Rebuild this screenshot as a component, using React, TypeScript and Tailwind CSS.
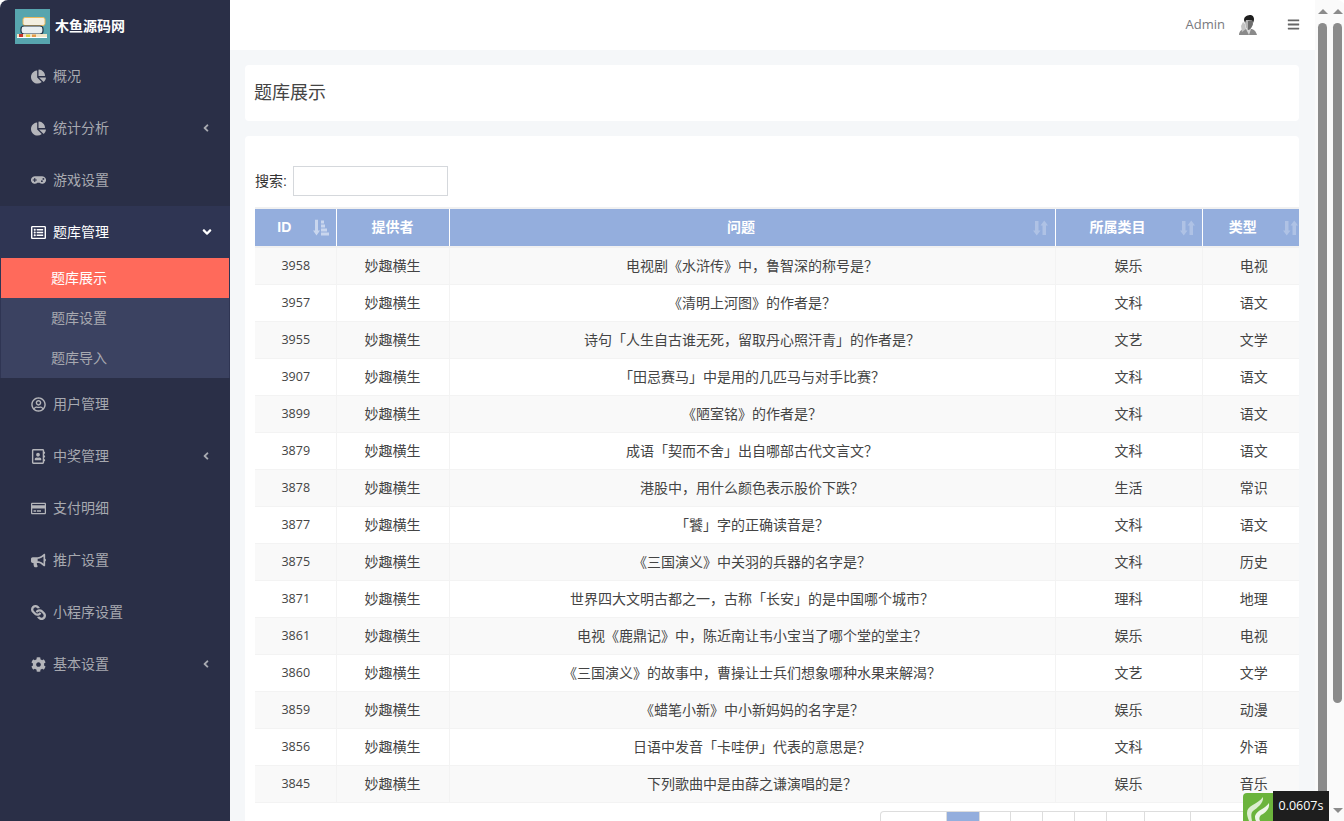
import React from "react";
import { FaChartPie, FaGamepad, FaRegListAlt, FaRegUserCircle, FaRegAddressBook, FaRegCreditCard, FaBullhorn, FaLink, FaCog, FaAngleLeft, FaAngleDown, FaBars } from "react-icons/fa";

const font = "font-['Liberation_Sans','Noto_Sans_CJK_SC',sans-serif]";

const rows = [
  ["3958", "电视剧《水浒传》中，鲁智深的称号是？", "娱乐", "电视"],
  ["3957", "《清明上河图》的作者是？", "文科", "语文"],
  ["3955", "诗句「人生自古谁无死，留取丹心照汗青」的作者是？", "文艺", "文学"],
  ["3907", "「田忌赛马」中是用的几匹马与对手比赛？", "文科", "语文"],
  ["3899", "《陋室铭》的作者是？", "文科", "语文"],
  ["3879", "成语「契而不舍」出自哪部古代文言文？", "文科", "语文"],
  ["3878", "港股中，用什么颜色表示股价下跌？", "生活", "常识"],
  ["3877", "「饕」字的正确读音是？", "文科", "语文"],
  ["3875", "《三国演义》中关羽的兵器的名字是？", "文科", "历史"],
  ["3871", "世界四大文明古都之一，古称「长安」的是中国哪个城市？", "理科", "地理"],
  ["3861", "电视《鹿鼎记》中，陈近南让韦小宝当了哪个堂的堂主？", "娱乐", "电视"],
  ["3860", "《三国演义》的故事中，曹操让士兵们想象哪种水果来解渴？", "文艺", "文学"],
  ["3859", "《蜡笔小新》中小新妈妈的名字是？", "娱乐", "动漫"],
  ["3856", "日语中发音「卡哇伊」代表的意思是？", "文科", "外语"],
  ["3845", "下列歌曲中是由薛之谦演唱的是？", "娱乐", "音乐"],
];

type Item = { icon: React.ReactNode; label: string; arrow?: boolean };
const top: Item[] = [
  { icon: <FaChartPie />, label: "概况" },
  { icon: <FaChartPie />, label: "统计分析", arrow: true },
  { icon: <FaGamepad className="text-[16px]" />, label: "游戏设置" },
];
const bottom: Item[] = [
  { icon: <FaRegUserCircle />, label: "用户管理" },
  { icon: <FaRegAddressBook />, label: "中奖管理", arrow: true },
  { icon: <FaRegCreditCard className="text-[15px]" />, label: "支付明细" },
  { icon: <FaBullhorn />, label: "推广设置" },
  { icon: <FaLink className="rotate-90" />, label: "小程序设置" },
  { icon: <FaCog />, label: "基本设置", arrow: true },
];

function MenuRow({ item }: { item: Item }) {
  return (
    <div className="flex h-[52px] items-center pl-[31px] pr-[18px] text-[14px] text-[#a7a9b0]">
      <span className="flex w-[15px] justify-center text-[15px] text-[#b4b5ba]">{item.icon}</span>
      <span className="ml-[7px] flex-1">{item.label}</span>
      {item.arrow && <FaAngleLeft className="text-[12px]" />}
    </div>
  );
}

function Logo() {
  return (
    <svg width="35" height="35" viewBox="0 0 35 35" className="shrink-0">
      <rect width="35" height="35" fill="#57a5ae" />
      <rect x="8" y="8.5" width="22" height="8" rx="2" fill="#f3efe0" stroke="#e9b85c" strokeWidth="1" />
      <rect x="6" y="17" width="22" height="8" rx="3" fill="#e8eef0" stroke="#24384a" strokeWidth="1.2" />
      <rect x="2" y="25" width="30" height="3" fill="#efe6c8" />
      <rect x="4" y="25" width="4" height="3" fill="#c9352c" />
      <rect x="11" y="25.5" width="4" height="2.5" fill="#dfd03c" />
      <rect x="17" y="25.5" width="4" height="2.5" fill="#e39a4a" />
      <rect x="2" y="28" width="30" height="1" fill="#ffffff" />
    </svg>
  );
}

function Avatar() {
  return (
    <svg width="18" height="20" viewBox="0 0 18 20">
      <path d="M0 20 C0 16 3 14 6 14 L13 14 C16 15 17 17 18 20 Z" fill="#8a8a8a" />
      <path d="M7 14 L12 14 L10 20 Z" fill="#d8d8d8" />
      <path d="M6 5 L13 4 L14 9 C13 12 11 15 9 15 C7 14 6 10 6 5 Z" fill="#b5b5b5" />
      <path d="M9 6 L13 5 L14 9 C13 12 11 15 9 15 Z" fill="#6e6e6e" />
      <path d="M5 5 C5 1 9 0 12 0 C15 1 16 4 14 8 L13 5 L7 5 L6 8 Z" fill="#1f1f1f" />
      <path d="M2 11 L4 7 L6 9 L7 14 L3 17 Z" fill="#c4c4c4" />
    </svg>
  );
}

function Flame() {
  return (
    <svg width="30" height="28" viewBox="0 0 30 28" className="mt-[2px] block">
      <path d="M0 4 Q0 0 4 0 L30 0 L30 28 L0 28 Z" fill="#6bb43c" />
      <path d="M4 20 C4 12 14 12 20 4 C21 10 14 15 10 18 C8 20 8 22 9 28 L6 28 C5 25 4 23 4 20 Z" fill="#dcedd0" />
      <path d="M12 23 C14 17 22 16 26 10 C27 16 22 20 18 22 C16 24 16 26 17 28 L13 28 C12 26 12 25 12 23 Z" fill="#eef6e8" />
    </svg>
  );
}

function Sort({ active }: { active?: boolean }) {
  return active ? (
    <svg width="16" height="17" viewBox="0 0 16 17" className="absolute right-[7px] top-1/2 -translate-y-1/2 opacity-50">
      <path d="M2 0 H5 V11 H7 L3.5 16 L0 11 H2 Z" fill="#fff" />
      <rect x="8" y="1" width="3" height="3" fill="#fff" />
      <rect x="8" y="5" width="4" height="3" fill="#fff" />
      <rect x="8" y="9" width="6" height="3" fill="#fff" />
      <rect x="8" y="13" width="8" height="3" fill="#fff" />
    </svg>
  ) : (
    <svg width="15" height="16" viewBox="0 0 15 16" className="absolute right-[7px] top-1/2 -translate-y-1/2 opacity-25">
      <path d="M2 1 H5.5 V10.5 H7.5 L3.75 15.5 L0 10.5 H2 Z" fill="#fff" />
      <path d="M9.5 15 H13 V5.5 H15 L11.25 0.5 L7.5 5.5 H9.5 Z" fill="#fff" />
    </svg>
  );
}

function Bar({ outer }: { outer?: boolean }) {
  return (
    <div className={`flex h-full w-[15px] shrink-0 flex-col items-center bg-[#fafafa] ${outer ? "rounded-tr-[8px]" : ""}`}>
      <div className="mt-[9px] h-0 w-0 border-x-[5px] border-b-[5px] border-x-transparent border-b-[#8b8b8b]" />
      <div className={`mt-[9px] w-[9px] rounded-t-[5px] bg-[#8b8b8b] ${outer ? "h-[680px] rounded-b-[5px]" : "flex-1"}`} />
      {outer && <div className="mb-[8px] mt-auto h-0 w-0 border-x-[5px] border-t-[5px] border-x-transparent border-t-[#8b8b8b]" />}
    </div>
  );
}

export default function App() {
  const pages = [
    "w-[66px]",
    "w-[33px] bg-[#94aedd]",
    "w-[31px]",
    "w-[32px]",
    "w-[32px]",
    "w-[32px]",
    "w-[38px]",
    "w-[46px]",
    "w-[54px]",
    "w-[53px]",
  ];
  return (
    <div className={`relative flex h-[821px] w-[1344px] overflow-hidden bg-white ${font}`}>
      <aside className="h-full w-[230px] shrink-0 rounded-tl-[8px] bg-[#2a2f47]">
        <div className="flex h-[50px] items-center pl-[15px] pt-[2px]">
          <Logo />
          <span className="ml-[5px] text-[14px] font-bold text-white">木鱼源码网</span>
        </div>
        {top.map((i) => (
          <MenuRow key={i.label} item={i} />
        ))}
        <div className="bg-[#2f3553]">
          <div className="flex h-[52px] items-center pl-[31px] pr-[16px] text-[14px] text-white">
            <span className="flex w-[15px] justify-center text-[15px]"><FaRegListAlt /></span>
            <span className="ml-[7px] flex-1">题库管理</span>
            <FaAngleDown className="text-[14px]" />
          </div>
          <div className="border-x border-[#2f3553] text-[14px] text-[#a7a9b0]">
            <div className="flex h-[40px] items-center bg-[#ff6a5b] pl-[50px] text-white">题库展示</div>
            <div className="flex h-[40px] items-center bg-[#3b4261] pl-[50px]">题库设置</div>
            <div className="flex h-[40px] items-center bg-[#3b4261] pl-[50px]">题库导入</div>
          </div>
        </div>
        {bottom.map((i) => (
          <MenuRow key={i.label} item={i} />
        ))}
      </aside>

      <main className="flex h-full w-[1085px] shrink-0 flex-col overflow-hidden bg-[#f5f7f9]">
        <header className="flex h-[50px] shrink-0 items-center justify-end bg-white pb-[1px] pr-[15px]">
          <span className="font-['Open_Sans',sans-serif] text-[13px] text-[#77797e]">Admin</span>
          <span className="ml-[14px]"><Avatar /></span>
          <FaBars className="ml-[30px] text-[13px] text-[#666]" />
        </header>

        <div className="ml-[15px] mr-[16px] mt-[15px] flex h-[56px] shrink-0 items-center rounded-[4px] bg-white pl-[9px] pt-[1px] text-[18px] text-[#444]">
          题库展示
        </div>

        <section className="ml-[15px] mr-[16px] mt-[15px] flex-1 rounded-t-[4px] bg-white pl-[10px] pt-[30px]">
          <div className="flex items-center text-[14px] text-[#333]">
            <span>搜索:</span>
            <div className="ml-[6px] h-[30px] w-[155px] border border-[#d5d8dc] bg-white" />
          </div>
          <div className="mt-[11px] overflow-hidden">
            <table className="w-[1050px] table-fixed border-collapse text-center text-[14px] text-[#444]">
              <colgroup>
                <col className="w-[81px]" />
                <col className="w-[113px]" />
                <col className="w-[606px]" />
                <col className="w-[147px]" />
                <col className="w-[103px]" />
              </colgroup>
              <thead>
                <tr className="h-[39px] border-y-2 border-[#f1f1f1] bg-[#94aedd] text-white">
                  <th className="relative border-r border-white pr-[22px] font-bold">ID<Sort active /></th>
                  <th className="relative border-r border-white font-bold">提供者</th>
                  <th className="relative border-r border-white pr-[22px] font-bold">问题<Sort /></th>
                  <th className="relative border-r border-white pr-[22px] font-bold">所属类目<Sort /></th>
                  <th className="relative pr-[22px] font-bold">类型<Sort /></th>
                </tr>
              </thead>
              <tbody>
                {rows.map((r, i) => (
                  <tr key={r[0]} className={`h-[37px] border-b border-[#f3f3f3] ${i % 2 === 0 ? "bg-[#f9f9f9]" : "bg-white"}`}>
                    <td className="border-r border-[#f3f3f3] pt-[1px] pl-[1px] font-['Open_Sans',sans-serif] text-[12.5px] text-[#444]">{r[0]}</td>
                    <td className="border-r border-[#f3f3f3] pt-[1px]">妙趣横生</td>
                    <td className="border-r border-[#f3f3f3] pt-[1px]">{r[1]}</td>
                    <td className="border-r border-[#f3f3f3] pt-[1px]">{r[2]}</td>
                    <td className="pt-[1px]">{r[3]}</td>
                  </tr>
                ))}
              </tbody>
            </table>
          </div>
          <div className="mt-[8px] flex justify-end">
            <div className="flex h-[20px] overflow-hidden rounded-t-[4px] border border-b-0 border-[#ddd]">
              {pages.map((p, i) => (
                <div key={i} className={`h-full border-r border-[#ddd] last:border-r-0 ${p}`} />
              ))}
            </div>
          </div>
        </section>
      </main>

      <Bar />
      <Bar outer />

      <div className="absolute bottom-0 right-[15px] flex h-[30px] items-stretch">
        <Flame />
        <div className="flex w-[56px] items-center justify-center bg-[#1e1e1e] font-['Open_Sans',sans-serif] text-[12.5px] text-white">0.0607s</div>
      </div>
    </div>
  );
}
